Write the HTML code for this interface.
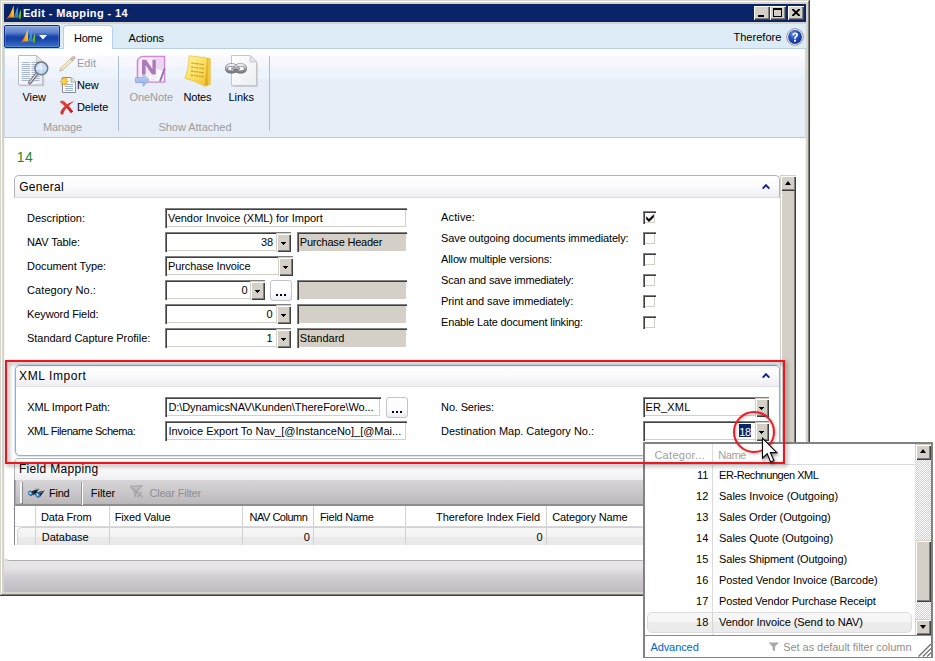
<!DOCTYPE html>
<html><head><meta charset="utf-8"><title>Edit - Mapping - 14</title>
<style>
html,body{margin:0;padding:0;}
body{width:935px;height:661px;background:#fff;position:relative;overflow:hidden;font-family:'Liberation Sans',sans-serif;}
div,span.t,svg{position:absolute;box-sizing:border-box;}
span.t{white-space:pre;}

.sunk{background:#fff;box-shadow:inset 1px 1px 0 #808080,inset 2px 2px 0 #404040,inset -1px -1px 0 #fff,inset -2px -2px 0 #d4d0c8;}
.ro{background:#d4d0c8;box-shadow:inset 1px 1px 0 #808080,inset 2px 2px 0 #404040,inset -1px -1px 0 #fff,inset -2px -2px 0 #d4d0c8;}
.btn{background:#d4d0c8;box-shadow:inset 1px 1px 0 #d4d0c8,inset 2px 2px 0 #fff,inset -1px -1px 0 #404040,inset -2px -2px 0 #808080;}
.tri{width:0;height:0;border-left:2.5px solid transparent;border-right:2.5px solid transparent;border-top:3px solid #000;}
.trid{width:0;height:0;border-left:3.5px solid transparent;border-right:3.5px solid transparent;border-top:4px solid #000;}
.cbtn{background:#d4d0c8;box-shadow:inset 1px 1px 0 #fff,inset -1px -1px 0 #404040,inset -2px -2px 0 #808080;}
.triu{width:0;height:0;border-left:3.5px solid transparent;border-right:3.5px solid transparent;border-bottom:4px solid #000;}
.hdr{border:1px solid #b4b4b4;border-bottom:1px solid #dcdcdc;border-radius:5px 5px 0 0;background:linear-gradient(#fff 0%,#fbfbfd 45%,#efedf1 100%);}
.ell{background:linear-gradient(#fff 0%,#fdfdff 55%,#ececf6 100%);border:1px solid #c3c3cc;border-radius:3px;}
.dot{width:2px;height:2px;background:#000;}

</style></head><body>
<div style="left:0px;top:0px;width:810px;height:596px;background:#d6d4ca;box-shadow:inset 1px 1px 0 #d6d4ca,inset 2px 2px 0 #fff,inset -1px -1px 0 #404040,inset -2px -2px 0 #808080;"></div><div style="left:1px;top:594px;width:808px;height:1px;background:#808080;"></div><div style="left:0px;top:595px;width:810px;height:1px;background:#404040;"></div><div style="left:808px;top:1px;width:1px;height:594px;background:#808080;"></div><div style="left:809px;top:0px;width:1px;height:596px;background:#404040;"></div><div style="left:4px;top:4px;width:802px;height:18px;background:#0a246a;"></div><div class="cbtn" style="left:754px;top:6px;width:16px;height:14px;"><div style="left:4px;top:9px;width:6px;height:2px;background:#000;"></div></div><div class="cbtn" style="left:770px;top:6px;width:16px;height:14px;"><div style="left:3px;top:2px;width:9px;height:9px;border:1px solid #000;border-top-width:2px;"></div></div><div class="cbtn" style="left:788px;top:6px;width:16px;height:14px;"><svg style="left:4px;top:3px" width="8" height="7" viewBox="0 0 8 7"><path d="M0.3 0L7.7 7M7.7 0L0.3 7" stroke="#000" stroke-width="2"/></svg></div><div style="left:4px;top:23px;width:802px;height:26px;background:#dcebf5;border-top:1px solid #c5d6e6;border-bottom:1px solid #b9cfe3;"></div><div style="left:4px;top:25px;width:56px;height:23px;border:1px solid #0c2f8c;border-radius:2px;background:linear-gradient(#8aa4dc 0%,#5f84d0 30%,#1a48ac 50%,#1544a8 62%,#3a70cc 100%);box-shadow:inset 0 0 0 1px rgba(255,255,255,.18);"></div><svg style="left:39px;top:35px" width="8" height="5" viewBox="0 0 8 5"><path d="M0 0H8L4 4.6Z" fill="#fff"/></svg><div style="left:63px;top:25px;width:50px;height:24px;background:linear-gradient(#fdfeff,#fff);border:1px solid #b9cfe3;border-bottom:none;border-radius:4px 4px 0 0;"></div><div style="left:4px;top:49px;width:802px;height:89px;background:linear-gradient(#fff 0px,#fff 6px,#f8f8fe 8px,#f6f6fd 17px,#eef4fc 19px,#edf4fc 29px,#e7eef7 31px,#e7eef7 100%);border-bottom:1px solid #b6c9dd;border-left:1px solid #c9d9e8;border-right:1px solid #c9d9e8;"></div><div style="left:118px;top:56px;width:1px;height:75px;background:#aebdd0;"></div><div style="left:269px;top:56px;width:1px;height:75px;background:#aebdd0;"></div><div style="left:4px;top:550px;width:802px;height:42px;background:linear-gradient(#e9e6ea 10px,#e6e3e7 18px,#cfcbd0 28px,#bfbbc0 42px);"></div><div style="left:4px;top:138px;width:802px;height:423px;background:#fff;border:1px solid #b0b0b0;border-left-color:#f4f4f4;border-right-color:#f4f4f4;border-top:none;border-radius:0 0 5px 5px;"></div><div class="hdr" style="left:14px;top:175px;width:766px;height:23px;"></div><svg style="left:762px;top:184px" width="8" height="5" viewBox="0 0 8 5"><path d="M0.7 4.6L4 1.2L7.3 4.6" fill="none" stroke="#0b1fa0" stroke-width="1.9"/></svg><div class="sunk" style="left:165px;top:208px;width:242px;height:20px;"></div><div class="sunk" style="left:165px;top:232px;width:126px;height:20px;"></div><div class="btn" style="left:276px;top:233px;width:15px;height:19px;"><div style="left:5px;top:9px;width:5px;height:1px;background:#000;"></div><div style="left:6px;top:10px;width:3px;height:1px;background:#000;"></div><div style="left:7px;top:11px;width:1px;height:1px;background:#000;"></div></div><div class="ro" style="left:297px;top:232px;width:110px;height:20px;"></div><div class="sunk" style="left:165px;top:256px;width:128px;height:20px;"></div><div class="btn" style="left:278px;top:257px;width:15px;height:19px;"><div style="left:5px;top:9px;width:5px;height:1px;background:#000;"></div><div style="left:6px;top:10px;width:3px;height:1px;background:#000;"></div><div style="left:7px;top:11px;width:1px;height:1px;background:#000;"></div></div><div class="sunk" style="left:165px;top:280px;width:100px;height:20px;"></div><div class="btn" style="left:250px;top:281px;width:15px;height:19px;"><div style="left:5px;top:9px;width:5px;height:1px;background:#000;"></div><div style="left:6px;top:10px;width:3px;height:1px;background:#000;"></div><div style="left:7px;top:11px;width:1px;height:1px;background:#000;"></div></div><div class="ro" style="left:297px;top:280px;width:110px;height:20px;"></div><div class="ell" style="left:270px;top:280px;width:22px;height:21px;"><div class="dot" style="left:5px;top:13px;width:2px;height:2px;"></div><div class="dot" style="left:9px;top:13px;width:2px;height:2px;"></div><div class="dot" style="left:13px;top:13px;width:2px;height:2px;"></div></div><div class="sunk" style="left:165px;top:304px;width:126px;height:20px;"></div><div class="btn" style="left:276px;top:305px;width:15px;height:19px;"><div style="left:5px;top:9px;width:5px;height:1px;background:#000;"></div><div style="left:6px;top:10px;width:3px;height:1px;background:#000;"></div><div style="left:7px;top:11px;width:1px;height:1px;background:#000;"></div></div><div class="ro" style="left:297px;top:304px;width:110px;height:20px;"></div><div class="sunk" style="left:165px;top:328px;width:126px;height:20px;"></div><div class="btn" style="left:276px;top:329px;width:15px;height:19px;"><div style="left:5px;top:9px;width:5px;height:1px;background:#000;"></div><div style="left:6px;top:10px;width:3px;height:1px;background:#000;"></div><div style="left:7px;top:11px;width:1px;height:1px;background:#000;"></div></div><div class="ro" style="left:297px;top:328px;width:110px;height:20px;"></div><div class="sunk" style="left:643px;top:211px;width:13px;height:13px;"></div><div class="sunk" style="left:643px;top:232px;width:13px;height:13px;"></div><div class="sunk" style="left:643px;top:253px;width:13px;height:13px;"></div><div class="sunk" style="left:643px;top:274px;width:13px;height:13px;"></div><div class="sunk" style="left:643px;top:295px;width:13px;height:13px;"></div><div class="sunk" style="left:643px;top:316px;width:13px;height:13px;"></div><svg style="left:646px;top:214px" width="8" height="8" viewBox="0 0 8 8"><path d="M0.2 2.2L3 5L7.8 0.2V3.2L3 8L0.2 5.2Z" fill="#000"/></svg><div style="left:780px;top:175px;width:16px;height:400px;background:#d4d0c8;box-shadow:inset 1px 0 0 #d4d0c8,inset 2px 0 0 #fff,inset -1px 0 0 #404040,inset -2px 0 0 #808080;"></div><div class="btn" style="left:780px;top:175px;width:16px;height:16px;"><div class="triu" style="left:4.5px;top:6px;width:0px;height:0px;"></div></div><div style="left:15px;top:365px;width:765px;height:91px;border:1px solid #86aee0;border-radius:5px;background:#fff;box-shadow:0 0 0 1px rgba(190,212,240,.55);"></div><div style="left:16px;top:366px;width:763px;height:21px;border-radius:4px 4px 0 0;background:linear-gradient(#fff 0%,#fbfbfd 45%,#eeeef2 100%);border-bottom:1px solid #e4e4ea;"></div><svg style="left:762px;top:373px" width="8" height="5" viewBox="0 0 8 5"><path d="M0.7 4.6L4 1.2L7.3 4.6" fill="none" stroke="#0b1fa0" stroke-width="1.9"/></svg><div class="sunk" style="left:165px;top:397px;width:216px;height:20px;"></div><div class="ell" style="left:386px;top:397px;width:22px;height:21px;"><div class="dot" style="left:5px;top:13px;width:2px;height:2px;"></div><div class="dot" style="left:9px;top:13px;width:2px;height:2px;"></div><div class="dot" style="left:13px;top:13px;width:2px;height:2px;"></div></div><div class="sunk" style="left:165px;top:421px;width:242px;height:20px;"></div><div class="sunk" style="left:643px;top:397px;width:126px;height:20px;"></div><div class="btn" style="left:755px;top:398px;width:14px;height:19px;"><div style="left:4px;top:9px;width:5px;height:1px;background:#000;"></div><div style="left:5px;top:10px;width:3px;height:1px;background:#000;"></div><div style="left:6px;top:11px;width:1px;height:1px;background:#000;"></div></div><div class="sunk" style="left:643px;top:421px;width:126px;height:20px;"></div><div class="btn" style="left:755px;top:422px;width:14px;height:19px;"><div style="left:4px;top:9px;width:5px;height:1px;background:#000;"></div><div style="left:5px;top:10px;width:3px;height:1px;background:#000;"></div><div style="left:6px;top:11px;width:1px;height:1px;background:#000;"></div></div><div style="left:739px;top:424px;width:11.5px;height:13px;background:#0a246a;"></div><div class="hdr" style="left:14px;top:458px;width:766px;height:23px;"></div><div style="left:15px;top:480px;width:765px;height:26px;background:linear-gradient(#d6d4d6 0%,#cecccf 35%,#c2c0c2 75%,#b9b7b9 100%);border-bottom:2px solid #8e8e8e;border-left:1px solid #a9a9a9;"></div><div style="left:20px;top:482px;width:3px;height:22px;border-left:1px solid #fff;border-right:1px solid #8c8c8c;border-bottom:1px solid #8c8c8c;background:#f4f4f4;"></div><div style="left:81px;top:482px;width:2px;height:23px;border-left:1px solid #9b9b9b;border-right:1px solid #fdfdfd;"></div><div style="left:15px;top:506px;width:765px;height:21px;background:#fff;border-bottom:1px solid #d9d9d9;"></div><div style="left:15px;top:527px;width:765px;height:18px;background:#fff;"></div><div style="left:17px;top:527px;width:770px;height:24px;border:1px solid #d2d2d2;border-radius:5px;background:linear-gradient(#f6f6f6 0,#f3f3f3 9px,#eaeaea 9px,#e8e8e8 100%);clip-path:inset(0 0 6px 0);"></div><div style="left:14px;top:480px;width:1px;height:65px;background:#868686;"></div><div style="left:35px;top:506px;width:1px;height:39px;background:#d2d2d2;"></div><div style="left:109px;top:506px;width:1px;height:39px;background:#d2d2d2;"></div><div style="left:242px;top:506px;width:1px;height:39px;background:#d2d2d2;"></div><div style="left:313px;top:506px;width:1px;height:39px;background:#d2d2d2;"></div><div style="left:405px;top:506px;width:1px;height:39px;background:#d2d2d2;"></div><div style="left:546px;top:506px;width:1px;height:39px;background:#d2d2d2;"></div><div style="left:643px;top:442px;width:290px;height:216px;background:#fff;border:2px solid #828282;border-bottom-width:1px;"></div><div style="left:645px;top:464px;width:270px;height:1px;background:#d9d9d9;"></div><div style="left:712px;top:444px;width:1px;height:191px;background:#dcdcdc;"></div><div style="left:645px;top:635px;width:286px;height:1px;background:#8a8a8a;"></div><div style="left:647px;top:612px;width:265px;height:21px;border:1px solid #dcdcdc;border-radius:5px;background:linear-gradient(#f7f7f7 0,#f5f5f5 9px,#ececec 9px,#ebebeb 100%);"></div><div style="left:712px;top:613px;width:1px;height:19px;background:#d4d4d4;"></div><div style="left:915px;top:444px;width:16px;height:191px;background:#ebe9e4;background-image:conic-gradient(#fff 25%,#d4d0c8 0 50%,#fff 0 75%,#d4d0c8 0);background-size:2px 2px;"></div><div class="btn" style="left:915px;top:444px;width:16px;height:16px;"><div class="triu" style="left:4.5px;top:5px;width:0px;height:0px;"></div></div><div class="btn" style="left:915px;top:619px;width:16px;height:16px;"><div class="trid" style="left:4.5px;top:6px;width:0px;height:0px;"></div></div><div class="btn" style="left:915px;top:540px;width:16px;height:62px;"></div><svg style="left:918px;top:643px" width="13" height="14" viewBox="0 0 13 14"><path d="M13 1L0.5 13.5M13 5.4L4.9 13.5M13 9.6L9.1 13.5" stroke="#6e6e6e" stroke-width="1.3"/></svg><svg style="left:768px;top:642px" width="12" height="10" viewBox="0 0 12 10"><path d="M0.5 0.5H11L7 4.8V9.5L4.6 8V4.8Z" fill="#a9a9a9"/></svg><svg style="left:0;top:0" width="0" height="0"><defs>
<linearGradient id="gS1" x1="0" y1="1" x2="0.9" y2="0"><stop offset="0" stop-color="#e23a12"/><stop offset="0.35" stop-color="#f58a16"/><stop offset="0.7" stop-color="#ffc81e"/><stop offset="1" stop-color="#ffe45a"/></linearGradient>
<linearGradient id="gS2" x1="0" y1="0" x2="0" y2="1"><stop offset="0" stop-color="#4ab4ff"/><stop offset="0.55" stop-color="#2f8ed0"/><stop offset="1" stop-color="#2f8a70"/></linearGradient>
<linearGradient id="gS3" x1="0" y1="0" x2="0" y2="1"><stop offset="0" stop-color="#a4e034"/><stop offset="1" stop-color="#4aa41a"/></linearGradient>
<linearGradient id="gPage" x1="0" y1="0" x2="1" y2="1"><stop offset="0" stop-color="#ffffff"/><stop offset="1" stop-color="#eceef2"/></linearGradient>
<radialGradient id="gLens" cx="0.4" cy="0.35" r="0.7"><stop offset="0" stop-color="#e8f3ff" stop-opacity=".9"/><stop offset="1" stop-color="#9cc4f2" stop-opacity=".85"/></radialGradient>
<linearGradient id="gNote" x1="0" y1="0" x2="1" y2="1"><stop offset="0" stop-color="#fff3a0"/><stop offset="0.6" stop-color="#fbdc55"/><stop offset="1" stop-color="#f0c030"/></linearGradient>
<radialGradient id="gHelp" cx="0.4" cy="0.3" r="0.8"><stop offset="0" stop-color="#6f95e8"/><stop offset="0.45" stop-color="#2450c0"/><stop offset="1" stop-color="#0a2a8c"/></radialGradient>
<linearGradient id="gChain" x1="0" y1="0" x2="0" y2="1"><stop offset="0" stop-color="#eeeef2"/><stop offset="0.5" stop-color="#aeaeb6"/><stop offset="1" stop-color="#77777f"/></linearGradient>
<linearGradient id="gArrow" x1="0" y1="0" x2="0" y2="1"><stop offset="0" stop-color="#b8d0f4"/><stop offset="1" stop-color="#6f9be0"/></linearGradient>
<linearGradient id="gX" x1="0" y1="0" x2="1" y2="1"><stop offset="0" stop-color="#f0504a"/><stop offset="1" stop-color="#c01010"/></linearGradient>
</defs></svg><svg style="left:5.6px;top:5.4px" width="15.68" height="14.7" viewBox="0 0 16 15"><path d="M0.2 14.2C3.4 11.4 6 6.4 7.7 0.2L8.5 12.9C5.4 12.6 2.4 13.2 0.2 14.2Z" fill="url(#gS1)"/>
<path d="M8.5 12.7C9.3 9.4 10.4 5.2 11.9 1.8L12.6 13.1C11.2 12.8 9.8 12.7 8.5 12.7Z" fill="url(#gS2)"/>
<path d="M12.7 13.1C13.1 10.4 13.9 7.2 15 4.5L15.6 14.4C14.7 13.8 13.7 13.4 12.7 13.1Z" fill="url(#gS3)"/>
<path d="M0.2 14.3C4.5 12.3 10.5 12.2 15.4 14.4" fill="none" stroke="#6a7a5a" stroke-width="0.5" opacity=".7"/></svg><svg style="left:19.8px;top:28.6px" width="15.68" height="14.7" viewBox="0 0 16 15"><path d="M0.2 14.2C3.4 11.4 6 6.4 7.7 0.2L8.5 12.9C5.4 12.6 2.4 13.2 0.2 14.2Z" fill="url(#gS1)"/>
<path d="M8.5 12.7C9.3 9.4 10.4 5.2 11.9 1.8L12.6 13.1C11.2 12.8 9.8 12.7 8.5 12.7Z" fill="url(#gS2)"/>
<path d="M12.7 13.1C13.1 10.4 13.9 7.2 15 4.5L15.6 14.4C14.7 13.8 13.7 13.4 12.7 13.1Z" fill="url(#gS3)"/>
<path d="M0.2 14.3C4.5 12.3 10.5 12.2 15.4 14.4" fill="none" stroke="#6a7a5a" stroke-width="0.5" opacity=".7"/></svg><svg style="left:18px;top:55px;" width="32" height="32" viewBox="0 0 32 32"><path d="M1.5 30.5V0.5H19.5L25.5 6.5V30.5Z" fill="#0002" transform="translate(0.8,0.8)"/>
<path d="M0.5 30V0.5H18.5L24.5 6.5V30Z" fill="url(#gPage)" stroke="#b9bcc4" stroke-width="1"/>
<path d="M18.5 0.5V6.5H24.5Z" fill="#e4e6ea" stroke="#b9bcc4" stroke-width="0.8"/>
<path d="M3.5 7.5H12M13.5 7.5H21.5" stroke="#a9b8d0" stroke-width="1"/><path d="M3.5 9.5H12M13.5 9.5H21.5" stroke="#a9b8d0" stroke-width="1"/><path d="M3.5 11.5H12M13.5 11.5H21.5" stroke="#a9b8d0" stroke-width="1"/><path d="M3.5 13.5H12M13.5 13.5H21.5" stroke="#a9b8d0" stroke-width="1"/><path d="M3.5 15.5H12M13.5 15.5H21.5" stroke="#a9b8d0" stroke-width="1"/><path d="M3.5 17.5H12M13.5 17.5H21.5" stroke="#a9b8d0" stroke-width="1"/><path d="M3.5 19.5H12M13.5 19.5H21.5" stroke="#a9b8d0" stroke-width="1"/><path d="M3.5 21.5H12M13.5 21.5H21.5" stroke="#a9b8d0" stroke-width="1"/><path d="M3.5 23.5H12M13.5 23.5H21.5" stroke="#a9b8d0" stroke-width="1"/><path d="M3.5 25.5H12M13.5 25.5H21.5" stroke="#a9b8d0" stroke-width="1"/>
<path d="M19.3 18.2L11.8 27.6" stroke="#6e6e72" stroke-width="3.4" stroke-linecap="round"/>
<path d="M19.1 18.4L11.9 27.3" stroke="#d8d8dc" stroke-width="1.4" stroke-linecap="round"/>
<circle cx="23.3" cy="13.4" r="6.4" fill="url(#gLens)" stroke="#77787e" stroke-width="1.5"/>
<path d="M23.3 8V19M18 13.4H28.6" stroke="#fff" stroke-width="0.7" opacity=".55"/></svg><svg style="left:58.6px;top:55.6px;" width="17" height="16" viewBox="0 0 17 16"><g opacity=".72"><path d="M1.7 12.1L12.7 1.6L14.8 3.7L3.8 14.3Z" fill="#f5e2a6" stroke="#a8966e" stroke-width="0.7"/>
<path d="M12.7 1.6L14 0.4C14.6 0 15.4 0.2 15.9 0.8C16.4 1.4 16.5 2.1 16 2.6L14.8 3.7Z" fill="#ee9aa4" stroke="#b86a76" stroke-width="0.5"/>
<path d="M11.6 2.6L13.8 4.8" stroke="#4f9a58" stroke-width="1.1"/>
<path d="M0.5 15.3L1.7 12.1L3.8 14.3Z" fill="#ead2a4" stroke="#a8966e" stroke-width="0.4"/><path d="M0.5 15.3L1 13.9L1.9 14.8Z" fill="#444"/></g></svg><svg style="left:58.6px;top:76.4px;" width="17" height="17" viewBox="0 0 17 17"><path d="M3.5 16.5V1.5H12L16.5 6V16.5Z" fill="#fff" stroke="#8a8d94" stroke-width="1"/>
<path d="M12 1.5V6H16.5" fill="#e8e9ee" stroke="#8a8d94" stroke-width="0.8"/>
<path d="M6 8.5H14" stroke="#9db4d8" stroke-width="1"/><path d="M6 10.5H14" stroke="#9db4d8" stroke-width="1"/><path d="M6 12.5H14" stroke="#9db4d8" stroke-width="1"/><path d="M6 14.5H14" stroke="#9db4d8" stroke-width="1"/>
<polygon points="5.20,0.20 6.19,3.00 8.88,1.72 7.60,4.41 10.40,5.40 7.60,6.39 8.88,9.08 6.19,7.80 5.20,10.60 4.21,7.80 1.52,9.08 2.80,6.39 0.00,5.40 2.80,4.41 1.52,1.72 4.21,3.00" fill="#f9a21a"/>
<circle cx="5.2" cy="5.4" r="2.4" fill="#ffd83a"/></svg><svg style="left:58.6px;top:99.6px;" width="17" height="16" viewBox="0 0 17 16"><path d="M0.6 2C1.8 0.3 4.6 0.6 6.2 2.2C9 5 11.8 8.2 14.2 11.6C13.6 12.4 12.6 12.9 11.6 12.9C9.2 9.6 5.8 5.8 0.6 2Z" fill="url(#gX)"/>
<path d="M15.9 0.9C12 3.2 8.8 6.2 6.6 9.2C5.2 11.1 4.5 12.6 4.2 14.2C3.6 15 2 14.8 1.5 13.6C1 11.6 2.4 9.4 4.6 7.2C7.6 4.2 11.4 1.8 15.9 0.9Z" fill="url(#gX)"/></svg><svg style="left:134.6px;top:55px;" width="32" height="32" viewBox="0 0 32 32"><g opacity=".78"><path d="M2.5 27V7C2.5 3.6 5 1.5 8 1.5H29.5V27Z" fill="#f6e8f8" stroke="#c86ac8" stroke-width="1.6"/>
<path d="M19 3H28.5V17L19 13Z" fill="#e6c4ea" opacity=".8"/>
<path d="M11 26.2L17.6 11.6L28.6 16V26.2Z" fill="#fdfbfe" stroke="#dccbe6" stroke-width="0.5"/>
<path d="M16 21L22 22.4M14.6 23.6L19.6 24.8" stroke="#e0cfe6" stroke-width="0.9"/>
<path d="M29.4 14.2L25.2 25.6" stroke="#7a4a92" stroke-width="1.8" stroke-linecap="round"/>
<path d="M7 19.4V4.8H11L17.4 14V4.8H20.8V19.4H17L10.6 10V19.4Z" fill="#9a58a8"/>
<path d="M0.5 22.5H8V18.9L14.2 25L8 31.4V27.6H0.5Z" fill="url(#gArrow)" stroke="#6a92dc" stroke-width="0.7"/></g></svg><svg style="left:184.4px;top:54.6px;" width="28" height="32" viewBox="0 0 28 32"><path d="M8 2L26.4 3.6V29.6L22 31.2Z" fill="#d9a520"/>
<path d="M23.4 3.3L26.4 3.6V29.6L23.6 30.6Z" fill="#f2c83c"/>
<path d="M5 0.8L23.2 2.8C22.8 12 22.2 22 20.8 31.4C15 28 8 25 0.8 23.4C3.6 16 4.6 8.6 5 0.8Z" fill="url(#gNote)" stroke="#e4b634" stroke-width="0.6"/>
<path d="M7.2 8.0L20.0 9.6" stroke="#b89030" stroke-width="1.1" stroke-dasharray="2.2 0.9 1.4 0.7"/><path d="M7.1000000000000005 12.05L19.75 13.649999999999999" stroke="#b89030" stroke-width="1.1" stroke-dasharray="2.2 0.9 1.4 0.7"/><path d="M7.0 16.1L19.5 17.7" stroke="#b89030" stroke-width="1.1" stroke-dasharray="2.2 0.9 1.4 0.7"/><path d="M6.9 20.15L19.25 21.75" stroke="#b89030" stroke-width="1.1" stroke-dasharray="2.2 0.9 1.4 0.7"/></svg><svg style="left:225.4px;top:54.8px;" width="33" height="32" viewBox="0 0 33 32"><path d="M7.5 31.5V1.5H26L32.5 8V31.5Z" fill="#0002" transform="translate(0.7,0.7)"/>
<path d="M6.5 30.5V0.5H25L31.5 7V30.5Z" fill="url(#gPage)" stroke="#c4c6cc" stroke-width="1"/>
<path d="M25 0.5V7H31.5Z" fill="#e6e7eb" stroke="#c4c6cc" stroke-width="0.8"/>
<g fill="none" stroke-linecap="round">
<rect x="1.5" y="10" width="10" height="7" rx="3.5" stroke="#6a6a72" stroke-width="3"/>
<rect x="1.5" y="10" width="10" height="7" rx="3.5" stroke="url(#gChain)" stroke-width="2"/>
<rect x="10.5" y="10" width="10" height="7" rx="3.5" stroke="#6a6a72" stroke-width="3"/>
<rect x="10.5" y="10" width="10" height="7" rx="3.5" stroke="url(#gChain)" stroke-width="2"/>
<path d="M8.5 13.5H13.5" stroke="#66666e" stroke-width="2.6"/><path d="M8.5 13.1H13.5" stroke="#d0d0d6" stroke-width="1.1"/>
</g></svg><svg style="left:785.8px;top:27.9px;" width="18" height="18" viewBox="0 0 18 18"><circle cx="9" cy="9" r="8.3" fill="#f2f2f4" stroke="#8a8a92" stroke-width="0.9"/>
<circle cx="9" cy="9" r="6.9" fill="url(#gHelp)"/>
<path d="M6.3 7.2C6.3 5.4 7.6 4.4 9.2 4.4C10.9 4.4 12 5.4 12 6.8C12 8 11.3 8.6 10.6 9.2C10 9.7 9.9 10 9.9 10.8H8.1C8.1 9.6 8.3 9.1 9.1 8.4C9.7 7.9 10.1 7.6 10.1 6.9C10.1 6.3 9.7 5.9 9.1 5.9C8.5 5.9 8.1 6.3 8.1 7.2Z" fill="#fff"/>
<rect x="8.1" y="11.7" width="1.9" height="1.9" fill="#fff"/></svg><svg style="left:27.6px;top:487.6px;" width="17" height="10" viewBox="0 0 17 10"><path d="M1.2 3.6L8.2 0.3L11.6 1L5.2 7.4Z" fill="#2c2c30"/>
<path d="M8.4 5L13.2 1.4L16.6 2.6L12 9Z" fill="#2c2c30"/>
<path d="M5.4 4.6L9 2.2L9.4 5L7.6 7Z" fill="#1c1c20"/>
<path d="M2.4 2.9L8.3 0.7L10.6 1.2" stroke="#e2e2e6" stroke-width="1.1" fill="none"/>
<path d="M9.8 3.8L13.4 1.9L15.6 2.8" stroke="#e2e2e6" stroke-width="1.1" fill="none"/>
<path d="M11.2 5.2L14.4 3.4" stroke="#9a9aa0" stroke-width="0.9"/>
<ellipse cx="2.5" cy="5.3" rx="1.9" ry="2.6" fill="#2f8fe8" stroke="#15407a" stroke-width="0.5" transform="rotate(-28 2.5 5.3)"/>
<ellipse cx="2.2" cy="5" rx="0.8" ry="1.4" fill="#9fe0ff" transform="rotate(-28 2.2 5)"/>
<ellipse cx="9.7" cy="6.9" rx="2" ry="2.7" fill="#2f8fe8" stroke="#15407a" stroke-width="0.5" transform="rotate(-28 9.7 6.9)"/>
<ellipse cx="9.4" cy="6.6" rx="0.8" ry="1.5" fill="#9fe0ff" transform="rotate(-28 9.4 6.6)"/></svg><svg style="left:128.8px;top:484.6px;" width="15" height="15" viewBox="0 0 15 15"><path d="M0.8 1.2L13.6 0.6L8.2 6.4L6.4 12.2L5.2 6.6Z" fill="#aaa8aa" stroke="#9c9a9c" stroke-width="0.6"/>
<path d="M2.2 1.8L11.6 1.4L7.4 5.4Z" fill="#c4c2c4" opacity=".8"/>
<path d="M8.2 6.6L13.4 12.6M12.6 6.8L8.6 11.8" stroke="#a09ea0" stroke-width="1.3"/></svg><span class="t" style="left:22.90px;top:6.19px;font-size:11px;line-height:14px;letter-spacing:0.385px;color:#fff;font-weight:bold;">Edit - Mapping - 14</span><span class="t" style="left:73.90px;top:31.19px;font-size:11px;line-height:14px;letter-spacing:-0.186px;color:#000;">Home</span><span class="t" style="left:128.40px;top:31.19px;font-size:11px;line-height:14px;letter-spacing:-0.068px;color:#000;">Actions</span><span class="t" style="left:733.40px;top:30.19px;font-size:11px;line-height:14px;letter-spacing:0.044px;color:#000;">Therefore</span><span class="t" style="left:22.40px;top:90.19px;font-size:11px;line-height:14px;letter-spacing:-0.039px;color:#000;">View</span><span class="t" style="left:76.90px;top:56.19px;font-size:11px;line-height:14px;letter-spacing:0.083px;color:#9b9b9b;">Edit</span><span class="t" style="left:76.90px;top:78.19px;font-size:11px;line-height:14px;letter-spacing:-0.139px;color:#000;">New</span><span class="t" style="left:76.90px;top:100.19px;font-size:11px;line-height:14px;letter-spacing:-0.066px;color:#000;">Delete</span><span class="t" style="left:43.00px;top:120.19px;font-size:11px;line-height:14px;letter-spacing:-0.111px;color:#9b9b9b;">Manage</span><span class="t" style="left:129.40px;top:90.19px;font-size:11px;line-height:14px;letter-spacing:-0.047px;color:#9b9b9b;">OneNote</span><span class="t" style="left:183.40px;top:90.19px;font-size:11px;line-height:14px;letter-spacing:-0.130px;color:#000;">Notes</span><span class="t" style="left:228.40px;top:90.19px;font-size:11px;line-height:14px;letter-spacing:-0.018px;color:#000;">Links</span><span class="t" style="left:158.40px;top:120.19px;font-size:11px;line-height:14px;letter-spacing:-0.022px;color:#9b9b9b;">Show Attached</span><span class="t" style="left:16.80px;top:148.15px;font-size:14px;line-height:18px;letter-spacing:0.461px;color:#1f8a1f;">14</span><span class="t" style="left:19.20px;top:178.84px;font-size:12px;line-height:16px;letter-spacing:0.300px;color:#000;">General</span><span class="t" style="left:27.00px;top:211.19px;font-size:11px;line-height:14px;letter-spacing:-0.007px;color:#000;">Description:</span><span class="t" style="left:27.00px;top:235.19px;font-size:11px;line-height:14px;letter-spacing:-0.112px;color:#000;">NAV Table:</span><span class="t" style="left:27.00px;top:259.19px;font-size:11px;line-height:14px;letter-spacing:-0.058px;color:#000;">Document Type:</span><span class="t" style="left:27.00px;top:283.19px;font-size:11px;line-height:14px;letter-spacing:0.087px;color:#000;">Category No.:</span><span class="t" style="left:27.00px;top:307.19px;font-size:11px;line-height:14px;letter-spacing:-0.090px;color:#000;">Keyword Field:</span><span class="t" style="left:27.00px;top:331.19px;font-size:11px;line-height:14px;letter-spacing:-0.034px;color:#000;">Standard Capture Profile:</span><span class="t" style="left:168.00px;top:211.19px;font-size:11px;line-height:14px;letter-spacing:-0.039px;color:#000;">Vendor Invoice (XML) for Import</span><span class="t" style="left:260.95px;top:235.19px;font-size:11px;line-height:14px;letter-spacing:0.000px;color:#000;">38</span><span class="t" style="left:299.80px;top:235.19px;font-size:11px;line-height:14px;letter-spacing:-0.214px;color:#000;">Purchase Header</span><span class="t" style="left:168.00px;top:259.19px;font-size:11px;line-height:14px;letter-spacing:-0.118px;color:#000;">Purchase Invoice</span><span class="t" style="left:241.47px;top:283.19px;font-size:11px;line-height:14px;letter-spacing:0.000px;color:#000;">0</span><span class="t" style="left:266.48px;top:307.19px;font-size:11px;line-height:14px;letter-spacing:0.000px;color:#000;">0</span><span class="t" style="left:266.48px;top:331.19px;font-size:11px;line-height:14px;letter-spacing:0.000px;color:#000;">1</span><span class="t" style="left:299.80px;top:331.19px;font-size:11px;line-height:14px;letter-spacing:0.005px;color:#000;">Standard</span><span class="t" style="left:441.10px;top:210.19px;font-size:11px;line-height:14px;letter-spacing:0.126px;color:#000;">Active:</span><span class="t" style="left:441.10px;top:231.19px;font-size:11px;line-height:14px;letter-spacing:-0.128px;color:#000;">Save outgoing documents immediately:</span><span class="t" style="left:441.10px;top:252.19px;font-size:11px;line-height:14px;letter-spacing:-0.143px;color:#000;">Allow multiple versions:</span><span class="t" style="left:441.10px;top:273.19px;font-size:11px;line-height:14px;letter-spacing:-0.191px;color:#000;">Scan and save immediately:</span><span class="t" style="left:441.10px;top:294.19px;font-size:11px;line-height:14px;letter-spacing:-0.112px;color:#000;">Print and save immediately:</span><span class="t" style="left:441.10px;top:315.19px;font-size:11px;line-height:14px;letter-spacing:-0.193px;color:#000;">Enable Late document linking:</span><span class="t" style="left:19.10px;top:367.84px;font-size:12px;line-height:16px;letter-spacing:0.582px;color:#000;">XML Import</span><span class="t" style="left:27.20px;top:400.19px;font-size:11px;line-height:14px;letter-spacing:-0.149px;color:#000;">XML Import Path:</span><span class="t" style="left:27.20px;top:424.19px;font-size:11px;line-height:14px;letter-spacing:-0.444px;color:#000;">XML Filename Schema:</span><span class="t" style="left:168.40px;top:400.19px;font-size:11px;line-height:14px;letter-spacing:-0.080px;color:#000;">D:\DynamicsNAV\Kunden\ThereFore\Wo...</span><span class="t" style="left:168.40px;top:424.19px;font-size:11px;line-height:14px;letter-spacing:-0.006px;color:#000;">Invoice Export To Nav_[@InstanceNo]_[@Mai...</span><span class="t" style="left:441.10px;top:400.19px;font-size:11px;line-height:14px;letter-spacing:-0.157px;color:#000;">No. Series:</span><span class="t" style="left:441.10px;top:424.19px;font-size:11px;line-height:14px;letter-spacing:-0.019px;color:#000;">Destination Map. Category No.:</span><span class="t" style="left:645.40px;top:400.19px;font-size:11px;line-height:14px;letter-spacing:0.178px;color:#000;">ER_XML</span><span class="t" style="left:18.90px;top:460.84px;font-size:12px;line-height:16px;letter-spacing:0.325px;color:#000;">Field Mapping</span><span class="t" style="left:48.90px;top:486.19px;font-size:11px;line-height:14px;letter-spacing:-0.202px;color:#000;">Find</span><span class="t" style="left:90.70px;top:486.19px;font-size:11px;line-height:14px;letter-spacing:0.024px;color:#000;">Filter</span><span class="t" style="left:149.40px;top:486.19px;font-size:11px;line-height:14px;letter-spacing:-0.183px;color:#8f8f8f;">Clear Filter</span><span class="t" style="left:41.00px;top:510.19px;font-size:11px;line-height:14px;letter-spacing:-0.163px;color:#000;">Data From</span><span class="t" style="left:114.70px;top:510.19px;font-size:11px;line-height:14px;letter-spacing:-0.135px;color:#000;">Fixed Value</span><span class="t" style="left:249.51px;top:510.19px;font-size:11px;line-height:14px;letter-spacing:-0.487px;color:#000;">NAV Column</span><span class="t" style="left:319.90px;top:510.19px;font-size:11px;line-height:14px;letter-spacing:-0.265px;color:#000;">Field Name</span><span class="t" style="left:435.98px;top:510.19px;font-size:11px;line-height:14px;letter-spacing:-0.022px;color:#000;">Therefore Index Field</span><span class="t" style="left:552.20px;top:510.19px;font-size:11px;line-height:14px;letter-spacing:-0.134px;color:#000;">Category Name</span><span class="t" style="left:41.80px;top:530.19px;font-size:11px;line-height:14px;letter-spacing:-0.024px;color:#000;">Database</span><span class="t" style="left:303.78px;top:530.19px;font-size:11px;line-height:14px;letter-spacing:0.000px;color:#000;">0</span><span class="t" style="left:536.48px;top:530.19px;font-size:11px;line-height:14px;letter-spacing:0.000px;color:#000;">0</span><span class="t" style="left:654.40px;top:448.19px;font-size:11px;line-height:14px;letter-spacing:0.290px;color:#a0a0a0;">Categor...</span><span class="t" style="left:718.20px;top:448.19px;font-size:11px;line-height:14px;letter-spacing:-0.436px;color:#a0a0a0;">Name</span><span class="t" style="left:696.88px;top:468.19px;font-size:11px;line-height:14px;letter-spacing:0.000px;color:#000;">11</span><span class="t" style="left:696.05px;top:489.19px;font-size:11px;line-height:14px;letter-spacing:0.000px;color:#000;">12</span><span class="t" style="left:696.05px;top:510.19px;font-size:11px;line-height:14px;letter-spacing:0.000px;color:#000;">13</span><span class="t" style="left:696.05px;top:531.19px;font-size:11px;line-height:14px;letter-spacing:0.000px;color:#000;">14</span><span class="t" style="left:696.05px;top:552.19px;font-size:11px;line-height:14px;letter-spacing:0.000px;color:#000;">15</span><span class="t" style="left:696.05px;top:573.19px;font-size:11px;line-height:14px;letter-spacing:0.000px;color:#000;">16</span><span class="t" style="left:696.05px;top:594.19px;font-size:11px;line-height:14px;letter-spacing:0.000px;color:#000;">17</span><span class="t" style="left:696.05px;top:615.19px;font-size:11px;line-height:14px;letter-spacing:0.000px;color:#000;">18</span><span class="t" style="left:719.10px;top:468.19px;font-size:11px;line-height:14px;letter-spacing:-0.448px;color:#000;">ER-Rechnungen XML</span><span class="t" style="left:719.10px;top:489.19px;font-size:11px;line-height:14px;letter-spacing:-0.065px;color:#000;">Sales Invoice (Outgoing)</span><span class="t" style="left:719.10px;top:510.19px;font-size:11px;line-height:14px;letter-spacing:-0.105px;color:#000;">Sales Order (Outgoing)</span><span class="t" style="left:719.10px;top:531.19px;font-size:11px;line-height:14px;letter-spacing:-0.076px;color:#000;">Sales Quote (Outgoing)</span><span class="t" style="left:719.10px;top:552.19px;font-size:11px;line-height:14px;letter-spacing:-0.171px;color:#000;">Sales Shipment (Outgoing)</span><span class="t" style="left:719.10px;top:573.19px;font-size:11px;line-height:14px;letter-spacing:-0.098px;color:#000;">Posted Vendor Invoice (Barcode)</span><span class="t" style="left:719.10px;top:594.19px;font-size:11px;line-height:14px;letter-spacing:-0.188px;color:#000;">Posted Vendor Purchase Receipt</span><span class="t" style="left:719.10px;top:615.19px;font-size:11px;line-height:14px;letter-spacing:-0.080px;color:#000;">Vendor Invoice (Send to NAV)</span><span class="t" style="left:650.40px;top:640.19px;font-size:11px;line-height:14px;letter-spacing:-0.080px;color:#0066cc;">Advanced</span><span class="t" style="left:783.20px;top:640.19px;font-size:11px;line-height:14px;letter-spacing:-0.047px;color:#909090;">Set as default filter column</span><span class="t" style="left:739.3px;top:424.5px;font-size:11px;line-height:14px;letter-spacing:-0.4px;color:#fff;">18</span><div style="left:5px;top:360px;width:780px;height:104px;border:2px solid #f0141c;filter:drop-shadow(2.5px 2.5px 2.2px rgba(0,0,0,.45));"></div><div style="left:732.6px;top:410.8px;width:42px;height:42px;border:2px solid #ec1c24;border-radius:50%;filter:drop-shadow(1.5px 1.5px 1.5px rgba(0,0,0,.3));"></div><svg style="left:761px;top:437px;filter:drop-shadow(1px 2px 1.5px rgba(0,0,0,.45))" width="18" height="28" viewBox="0 0 18 28"><path d="M1.5 1.2V21.2L6.2 16.8L9.7 24.9L12.9 23.5L9.4 15.6H15.8Z" fill="#fff" stroke="#000" stroke-width="1.1" stroke-linejoin="miter"/></svg>
</body></html>
